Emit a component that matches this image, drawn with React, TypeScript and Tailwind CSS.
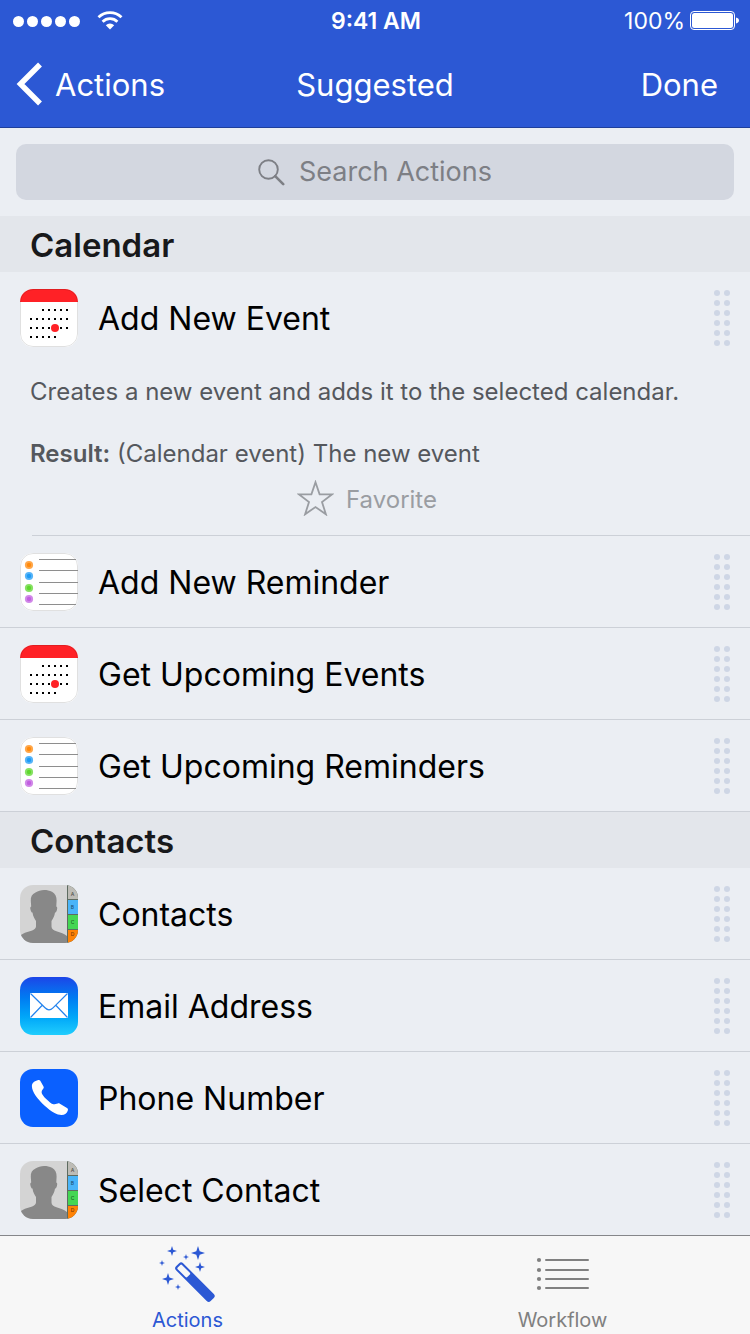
import React, { useState } from "react";

type IconKind = "calendar" | "reminders" | "contacts" | "mail" | "phone";

interface Action {
  title: string;
  icon: IconKind;
  description?: string;
  result?: string;
}

interface Section {
  name: string;
  actions: Action[];
}

const sections: Section[] = [
  {
    name: "Calendar",
    actions: [
      {
        title: "Add New Event",
        icon: "calendar",
        description: "Creates a new event and adds it to the selected calendar.",
        result: "(Calendar event) The new event",
      },
      { title: "Add New Reminder", icon: "reminders" },
      { title: "Get Upcoming Events", icon: "calendar" },
      { title: "Get Upcoming Reminders", icon: "reminders" },
    ],
  },
  {
    name: "Contacts",
    actions: [
      { title: "Contacts", icon: "contacts" },
      { title: "Email Address", icon: "mail" },
      { title: "Phone Number", icon: "phone" },
      { title: "Select Contact", icon: "contacts" },
    ],
  },
];

const tile = "size-[58px] shrink-0 overflow-hidden rounded-[13px]";

function CalendarIcon() {
  const rows = [
    { y: 21, from: 2, to: 6 },
    { y: 30, from: 0, to: 6 },
    { y: 39, from: 0, to: 6 },
    { y: 48, from: 0, to: 4 },
  ];
  return (
    <svg viewBox="0 0 58 58" className={tile} aria-hidden="true">
      <rect width="58" height="58" fill="#fff" />
      <rect width="58" height="13" fill="#ff2126" />
      {rows.map((r) =>
        Array.from({ length: r.to - r.from + 1 }, (_, i) => (
          <rect key={`${r.y}-${i}`} x={10 + (r.from + i) * 6} y={r.y - 1} width="2" height="2" fill="#000" />
        )),
      )}
      <circle cx="35" cy="39" r="4" fill="#ff2126" />
      <rect x="0.5" y="0.5" width="57" height="57" rx="12.5" fill="none" stroke="#000" strokeOpacity="0.12" />
    </svg>
  );
}

function RemindersIcon() {
  const dots = [
    { y: 12, color: "#ff8a0d" },
    { y: 23, color: "#1e9bf5" },
    { y: 35, color: "#5fd72f" },
    { y: 46, color: "#c160e0" },
  ];
  return (
    <svg viewBox="0 0 58 58" className={tile} aria-hidden="true">
      <rect width="58" height="58" fill="#fff" />
      <rect x="0.5" y="0.5" width="57" height="57" rx="12.5" fill="none" stroke="#000" strokeOpacity="0.12" />
      {dots.map((d) => (
        <g key={d.y} fill={d.color}>
          <circle cx="9" cy={d.y} r="4.1" opacity="0.75" />
          <circle cx="9" cy={d.y} r="2.2" />
        </g>
      ))}
      {[6, 17, 29, 40, 51].map((y) => (
        <rect key={y} x="19" y={y} width={y === 6 || y === 51 ? 37 : 39} height="1" fill="#8e8e8e" />
      ))}
    </svg>
  );
}

function ContactsIcon() {
  const tabs = [
    { letter: "A", y: 0, h: 14, color: "#bdbcb6", base: 11 },
    { letter: "B", y: 15, h: 14, color: "#4ab4f8", base: 24 },
    { letter: "C", y: 30, h: 14, color: "#44d653", base: 39 },
    { letter: "D", y: 45, h: 13, color: "#ff8205", base: 51 },
  ];
  return (
    <svg viewBox="0 0 58 58" className={tile} aria-hidden="true">
      <rect width="58" height="58" fill="#d4d4d4" />
      <path
        d="M24 5c-3 0-6 1-8.500 2.500C12 9 10.500 12 10.800 16l.4 5.500c-1.200.3-1.100 2-.6 3.500.4 1.400.9 2.600 1.900 2.600.5 3.500 1.700 6 3.500 8.400v5.500c0 2-2 3.300-4.500 4.200C7 47.300 2.500 48 0 51v7h47v-7c-2.500-2.500-6.500-3.500-10.500-4.800-2.800-1-5-2.200-5-4.700V36c1.800-2.400 3-5 3.500-8.400 1 0 1.500-1.200 1.900-2.600.5-1.500.5-3.200-.6-3.500l.3-6c.2-4-1.600-7-4.600-8.700C29.500 5.500 27 5 24 5z"
        fill="#888"
      />
      <rect x="47" width="11" height="58" fill="#5d6b60" />
      {tabs.map((t) => (
        <g key={t.letter}>
          <rect x="48" y={t.y} width="10" height={t.h} fill={t.color} />
          <text x="52.500" y={t.base} fontSize="5" fontWeight="600" textAnchor="middle" fill="#000" fillOpacity="0.55">
            {t.letter}
          </text>
        </g>
      ))}
    </svg>
  );
}

function MailIcon() {
  return (
    <span className="flex size-[58px] shrink-0 items-center justify-center rounded-[13px] bg-linear-to-b from-[#1b44e8] to-[#1fcdfd]">
      <svg viewBox="0 0 38 26" className="h-[26px] w-[38px]" aria-hidden="true">
        <rect width="38" height="25" fill="#fff" />
        <path
          d="M0.500 0.500l14.500 14.300c2.600 2.600 5.400 2.600 8 0L37.500 0.500M0.500 24.500L12 12.500M37.500 24.500L26 12.500"
          fill="none"
          stroke="#2383ee"
          strokeWidth="1.200"
        />
      </svg>
    </span>
  );
}

function PhoneIcon() {
  return (
    <svg viewBox="0 0 58 58" className={tile} aria-hidden="true">
      <rect width="58" height="58" fill="#0a60ff" />
      <path
        d="M18.300 11c.9-.3 1.500 0 2 .8l3.200 5.700c.5.9.3 1.700-.4 2.400-1 1-1.500 2-1.500 3.300 0 1.700 2 4.300 4.600 6.900 2.600 2.600 5.300 4.900 7.100 5.200.8.100 1.600-.1 2.300-.4l2.200-.5c.8-.2 1.400-.1 2.100.3l7.100 4.300c.9.600 1.100 1.200.9 2.200-.7 3-3.200 4.900-6.400 4.900-4.300 0-10-3-16.500-9C17.500 30 12 23 11.900 17.200c0-3.300 2.500-5.300 6.400-6.200z"
        fill="#fff"
      />
    </svg>
  );
}

function ActionIcon({ kind }: { kind: IconKind }) {
  switch (kind) {
    case "calendar":
      return <CalendarIcon />;
    case "reminders":
      return <RemindersIcon />;
    case "contacts":
      return <ContactsIcon />;
    case "mail":
      return <MailIcon />;
    case "phone":
      return <PhoneIcon />;
  }
}

function DragHandle({ title }: { title: string }) {
  return (
    <button type="button" aria-label={`Drag ${title}`} className="grid shrink-0 cursor-grab grid-cols-2 gap-1">
      {Array.from({ length: 12 }, (_, i) => (
        <span key={i} className="size-1.5 rounded-full bg-[#ced6e5]" />
      ))}
    </button>
  );
}

function ActionRow({ action, first, last }: { action: Action; first: boolean; last: boolean }) {
  const [open, setOpen] = useState(first);
  const [favorite, setFavorite] = useState(false);
  const expanded = open && action.description !== undefined;

  return (
    <li className={last || expanded ? "" : "border-b border-[#ccd0d7]"}>
      <div className={expanded ? "flex h-[92px] items-center pr-5" : "flex h-[91px] items-center pt-px pr-5"}>
        <button
          type="button"
          aria-expanded={expanded}
          onClick={() => setOpen(!open)}
          className="flex h-full grow items-center gap-5 pl-5 text-left text-[32px] text-black"
        >
          <ActionIcon kind={action.icon} />
          <span className="pt-0.5">{action.title}</span>
        </button>
        <DragHandle title={action.title} />
      </div>
      {expanded && (
        <div className="ml-8 border-b border-[#ccd0d7] pt-3 pb-[17px] text-2xl text-[#55585d]">
          <div className="-ml-0.5">
            <p>{action.description}</p>
            <p className="mt-[30px]">
              <b className="font-semibold">Result:</b> {action.result}
            </p>
          </div>
          <button
            type="button"
            aria-pressed={favorite}
            onClick={() => setFavorite(!favorite)}
            className="mx-auto mt-3 flex h-9 -translate-x-6 items-center gap-3 text-[#9a9da2]"
          >
            <svg viewBox="0 0 37 36" className="mb-1 h-9 w-[37px]" aria-hidden="true">
              <path
                d="M18.500 2.200l4.100 12.100h12.600L25 22l3.900 12.300L18.500 27 8.100 34.300 12 22 1.800 14.300h12.600z"
                fill={favorite ? "currentColor" : "none"}
                stroke="currentColor"
                strokeWidth="1.800"
              />
            </svg>
            Favorite
          </button>
        </div>
      )}
    </li>
  );
}

function StatusBar() {
  return (
    <div className="grid h-10 grid-cols-3 items-center pt-0.5 pr-[11px] pl-[13px] text-[23px]">
      <div className="flex items-center">
        <div className="flex gap-[3px]">
          {[0, 1, 2, 3, 4].map((i) => (
            <span key={i} className="size-[11px] rounded-full bg-white" />
          ))}
        </div>
        <svg viewBox="0 0 26 20" className="ml-[17px] h-5 w-[26px]" fill="none" stroke="#fff" aria-label="Wi-Fi">
          <path d="M1.500 6.300a16.500 16.500 0 0 1 23 0" strokeWidth="2.800" />
          <path d="M5.600 10.700a10.500 10.500 0 0 1 14.800 0" strokeWidth="2.800" />
          <path d="M13 18.500l-4.200-4.200a6 6 0 0 1 8.400 0z" fill="#fff" stroke="none" />
        </svg>
      </div>
      <time className="text-center font-semibold">9:41 AM</time>
      <div className="flex items-center justify-end gap-[5px]">
        <span>100%</span>
        <svg viewBox="0 0 49 20" className="h-5 w-[49px]" aria-label="Battery full">
          <rect x="0.500" y="0.500" width="44" height="18" rx="3.500" fill="none" stroke="#fff" />
          <rect x="2" y="2" width="41" height="15" rx="2.500" fill="#fff" />
          <path d="M46 6.500c1.800.4 3 1.600 3 3s-1.200 2.600-3 3z" fill="#fff" />
        </svg>
      </div>
    </div>
  );
}

function WandIcon() {
  const stars = [
    { x: 14, y: 7, r: 5 },
    { x: 40, y: 9, r: 7 },
    { x: 28, y: 13, r: 3 },
    { x: 4, y: 19, r: 3 },
    { x: 42, y: 23, r: 5 },
    { x: 10, y: 35, r: 6 },
    { x: 20, y: 43, r: 3 },
  ];
  return (
    <svg viewBox="1 0 58 60" className="h-[60px] w-[58px]" fill="currentColor" aria-hidden="true">
      {stars.map(({ x, y, r }) => {
        const k = r * 0.24;
        return (
          <path
            key={`${x}-${y}`}
            d={`M${x} ${y - r}L${x + k} ${y - k}L${x + r} ${y}L${x + k} ${y + k}L${x} ${y + r}L${x - k} ${y + k}L${x - r} ${y}L${x - k} ${y - k}z`}
          />
        );
      })}
      <g transform="translate(21 21.500) rotate(45)">
        <rect x="-1.500" y="-4.500" width="49" height="10" rx="2.800" />
        <rect x="0.500" y="-2.500" width="13.500" height="6" rx="1.200" fill="#f7f7f7" />
      </g>
    </svg>
  );
}

function WorkflowIcon() {
  return (
    <svg viewBox="0 0 54 60" className="h-[60px] w-[54px]" fill="currentColor" aria-hidden="true">
      {[16, 26, 35, 44].map((y) => (
        <g key={y}>
          <circle cx="3" cy={y} r="2.100" />
          <rect x="9" y={y - 1} width="44" height="2" rx="1" />
        </g>
      ))}
    </svg>
  );
}

export default function App() {
  const [tab, setTab] = useState("Actions");
  const tabs = [
    { name: "Actions", icon: <WandIcon /> },
    { name: "Workflow", icon: <WorkflowIcon /> },
  ];

  return (
    <div className="flex min-h-screen flex-col bg-[#ebeef3] font-['Inter','Liberation_Sans',sans-serif]">
      <header className="border-b border-[#1f3f9b] bg-[#2c58d4] text-white">
        <StatusBar />
        <nav className="grid h-[87px] grid-cols-3 items-center pt-1 pr-8 pl-4 text-[31px]">
          <a href="#actions" className="flex items-center gap-3">
            <svg viewBox="0 0 27 48" className="h-12 w-[27px]" fill="none" stroke="#fff" strokeWidth="5.500" aria-hidden="true">
              <path d="M24 2.500L4.500 22 24 41.500" />
            </svg>
            Actions
          </a>
          <h1 className="translate-x-2 text-center">Suggested</h1>
          <button type="button" className="justify-self-end">
            Done
          </button>
        </nav>
      </header>

      <main className="grow">
        <div className="p-4">
          <label className="flex h-14 items-center justify-center gap-3.5 rounded-[10px] bg-[#d3d7e0] text-[#7d7f85]">
            <svg viewBox="0 0 27 27" className="size-[27px]" fill="none" stroke="currentColor" aria-hidden="true">
              <circle cx="10.500" cy="10.500" r="9.300" strokeWidth="1.900" />
              <path d="M17.200 17.200l8 8" strokeWidth="2.600" strokeLinecap="round" />
            </svg>
            <input
              type="search"
              aria-label="Search Actions"
              placeholder="Search Actions"
              className="field-sizing-content bg-transparent text-[27px] outline-none placeholder:text-[#7d7f85]"
            />
          </label>
        </div>

        {sections.map((section, s) => (
          <section key={section.name}>
            <h2 className="flex h-14 items-center bg-[#e3e6eb] px-[30px] pt-1 text-[33px] font-semibold text-[#18191b]">
              {section.name}
            </h2>
            <ul>
              {section.actions.map((action, i) => (
                <ActionRow
                  key={action.title}
                  action={action}
                  first={s === 0 && i === 0}
                  last={s === sections.length - 1 && i === section.actions.length - 1}
                />
              ))}
            </ul>
          </section>
        ))}
      </main>

      <footer className="sticky bottom-0 grid grid-cols-2 border-t border-[#85868a] bg-[#f7f7f7]">
        {tabs.map(({ name, icon }) => (
          <button
            key={name}
            type="button"
            aria-pressed={tab === name}
            onClick={() => setTab(name)}
            className={
              tab === name
                ? "flex h-[98px] flex-col items-center pt-2 text-xl text-[#2c58d4]"
                : "flex h-[98px] flex-col items-center pt-2 text-xl text-[#808080]"
            }
          >
            {icon}
            <span className="mt-0.5">{name}</span>
          </button>
        ))}
      </footer>
    </div>
  );
}
